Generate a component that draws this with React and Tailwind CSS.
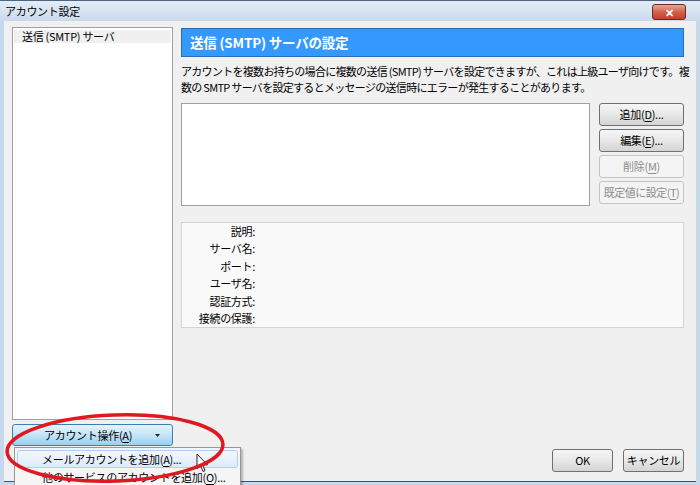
const font = { fontFamily: '"Noto Sans CJK JP", "Noto Sans", sans-serif' };

function WinButton({ children, disabled, className = "" }) {
  return (
    <div
      className={`h-[23px] flex items-center justify-center whitespace-nowrap rounded-[3px] border ${
        disabled
          ? "border-[#c2c6c9] bg-[#f4f4f4] text-[#8d8d8d]"
          : "border-[#707070] bg-gradient-to-b from-[#f6f6f6] via-[#e8e8e8] to-[#d4d4d4] text-black"
      } ${className}`}
    >
      {children}
    </div>
  );
}

function U({ children }) {
  return <span className="underline underline-offset-2">{children}</span>;
}

const details = ["説明:", "サーバ名:", "ポート:", "ユーザ名:", "認証方式:", "接続の保護:"];

export default function App() {
  return (
    <div style={font} className="relative w-[700px] h-[485px] overflow-hidden bg-[#c5d8ec] flex flex-col text-[11px] tracking-[-0.3px] text-black">
      {/* title bar */}
      <div className="h-[21px] shrink-0 flex items-center justify-between border-t border-[#4d6580] bg-gradient-to-b from-[#e4edf7] to-[#c9d9ec] pl-[5px] pr-[14px]">
        <span className="leading-none">アカウント設定</span>
        <div className="w-[34px] h-[16px] mt-[2px] rounded-[3px] border border-[#6e2b22] bg-gradient-to-b from-[#e8a796] via-[#d3614b] to-[#c0402a] flex items-center justify-center text-white text-[11px] font-bold leading-none">
          ✕
        </div>
      </div>

      {/* body */}
      <div className="flex-1 mx-[4px] bg-[#f0f0f0] flex pl-[8px] pr-[12px] pt-[6px] pb-[9px] border-b border-[#3d5570]">
        {/* left column */}
        <div className="w-[161px] shrink-0 flex flex-col">
          <div className="flex-1 bg-white border border-[#a0a0a0] pt-[2px] px-[1px]">
            <div className="h-[13px] bg-[#f0f0f0] pl-[8px] flex items-center leading-none whitespace-nowrap">送信 (SMTP) サーバ</div>
          </div>
          <div className="mt-[4px] h-[22px] rounded-[3px] border border-[#3c7fb1] bg-gradient-to-b from-[#e5f4fc] via-[#c4e5f6] to-[#98cfee] flex items-center pl-[31px] pr-[12px] whitespace-nowrap">
            <span className="flex-1">
              アカウント操作(<U>A</U>)
            </span>
            <svg width="5" height="3" viewBox="0 0 5 3">
              <path d="M0 0 H5 L2.5 3 Z" fill="#222" />
            </svg>
          </div>
          <div className="h-[26px] shrink-0" />
        </div>

        {/* right column */}
        <div className="flex-1 min-w-0 ml-[8px] flex flex-col">
          <div className="h-[29px] shrink-0 mt-[1px] bg-[#3399ff] border border-[#2a6cb5] flex items-center pl-[8px] text-white font-bold text-[13.5px] tracking-[-0.2px] whitespace-nowrap">
            送信 (SMTP) サーバの設定
          </div>
          <p className="mt-[6px] leading-[16px] tracking-[-0.7px] whitespace-nowrap">
            アカウントを複数お持ちの場合に複数の送信 (SMTP) サーバを設定できますが、これは上級ユーザ向けです。複
            <br />
            数の SMTP サーバを設定するとメッセージの送信時にエラーが発生することがあります。
          </p>
          <div className="mt-[8px] flex gap-[9px]">
            <div className="w-[409px] h-[103px] bg-white border border-[#a0a0a0]" />
            <div className="flex-1 flex flex-col gap-[3px]">
              <WinButton>
                追加(<U>D</U>)...
              </WinButton>
              <WinButton>
                編集(<U>E</U>)...
              </WinButton>
              <WinButton disabled>
                削除(<U>M</U>)
              </WinButton>
              <WinButton disabled className="tracking-[-0.5px]">
                既定値に設定(<U>T</U>)
              </WinButton>
            </div>
          </div>
          <div className="mt-[16px] h-[106px] shrink-0 bg-[#f9f9f9] border border-[#d5d5d5]">
            {details.map((d) => (
              <div key={d} className="h-[17.4px] w-[73px] text-right leading-[17px] whitespace-nowrap">
                {d}
              </div>
            ))}
          </div>
          <div className="mt-auto flex justify-end gap-[10px]">
            <WinButton className="w-[61px]">OK</WinButton>
            <WinButton className="w-[61px]">キャンセル</WinButton>
          </div>
        </div>
      </div>
      <div className="h-[3px] shrink-0" />

      {/* dropdown menu */}
      <div className="absolute left-[14px] top-[447px] w-[227px] h-[45px] bg-[#f5f5f5] border border-[#979797] shadow-[2px_2px_2px_rgba(0,0,0,0.25)] p-[2px] whitespace-nowrap">
        <div className="h-[18px] rounded-[3px] border border-[#aecff7] bg-gradient-to-b from-[#f2f8fe] to-[#dcebfc] flex items-center pl-[24px]">
          メールアカウントを追加(<U>A</U>)...
        </div>
        <div className="h-[18px] flex items-center pl-[25px]">
          他のサービスのアカウントを追加(<U>O</U>)...
        </div>
      </div>

      {/* cursor */}
      <svg className="absolute left-[196px] top-[453px]" width="13" height="20" viewBox="0 0 13 20">
        <path d="M1 1 L1 16 L4.5 12.5 L7 18.5 L9 17.6 L6.6 11.8 L11.5 11.8 Z" fill="white" stroke="#222" strokeWidth="1" strokeLinejoin="round" />
      </svg>

      {/* red annotation ellipse */}
      <svg className="absolute left-0 top-[405px] pointer-events-none" width="240" height="80" viewBox="0 0 240 80">
        <ellipse cx="115" cy="43" rx="108" ry="33" fill="none" stroke="#e01820" strokeWidth="3.5" transform="rotate(-2 115 43)" />
      </svg>
    </div>
  );
}
